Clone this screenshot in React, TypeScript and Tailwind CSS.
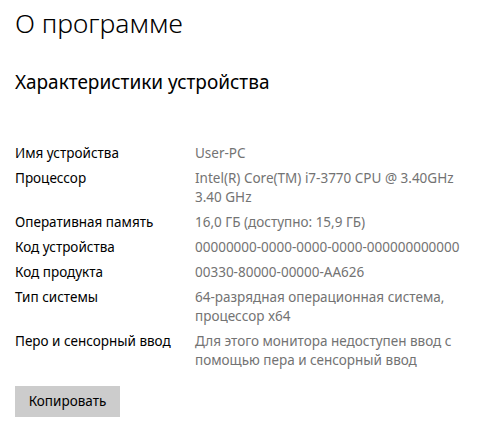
const rows: { label: string; value: string[] }[] = [
  { label: "Имя устройства", value: ["User-PC"] },
  { label: "Процессор", value: ["Intel(R) Core(TM) i7-3770 CPU @ 3.40GHz", "3.40 GHz"] },
  { label: "Оперативная память", value: ["16,0 ГБ (доступно: 15,9 ГБ)"] },
  { label: "Код устройства", value: ["00000000-0000-0000-0000-000000000000"] },
  { label: "Код продукта", value: ["00330-80000-00000-AA626"] },
  { label: "Тип системы", value: ["64-разрядная операционная система,", "процессор x64"] },
  {
    label: "Перо и сенсорный ввод",
    value: ["Для этого монитора недоступен ввод с", "помощью пера и сенсорный ввод"],
  },
];

export default function App() {
  return (
    <div
      className="h-[430px] w-[493px] bg-white pl-[15px] text-black"
      style={{ fontFamily: '"Noto Sans", "Open Sans", sans-serif' }}
    >
      <h1 className="pt-[5px] text-[26.5px] font-light leading-[36px]">О программе</h1>

      <h2 className="mt-[27px] text-[19px] leading-[28px]">Характеристики устройства</h2>

      <div className="mt-[48px] flex flex-col gap-[6px] text-[13.5px] leading-[19px]">
        {rows.map((row) => (
          <div key={row.label} className="grid grid-cols-[180px_1fr]">
            <div>{row.label}</div>
            <div className="text-[#737373]">
              {row.value.map((line) => (
                <div key={line} className="whitespace-nowrap">
                  {line}
                </div>
              ))}
            </div>
          </div>
        ))}
      </div>

      <button className="mt-[16px] h-[31px] w-[105px] bg-[#cccccc] text-[13.5px]">
        Копировать
      </button>
    </div>
  );
}
